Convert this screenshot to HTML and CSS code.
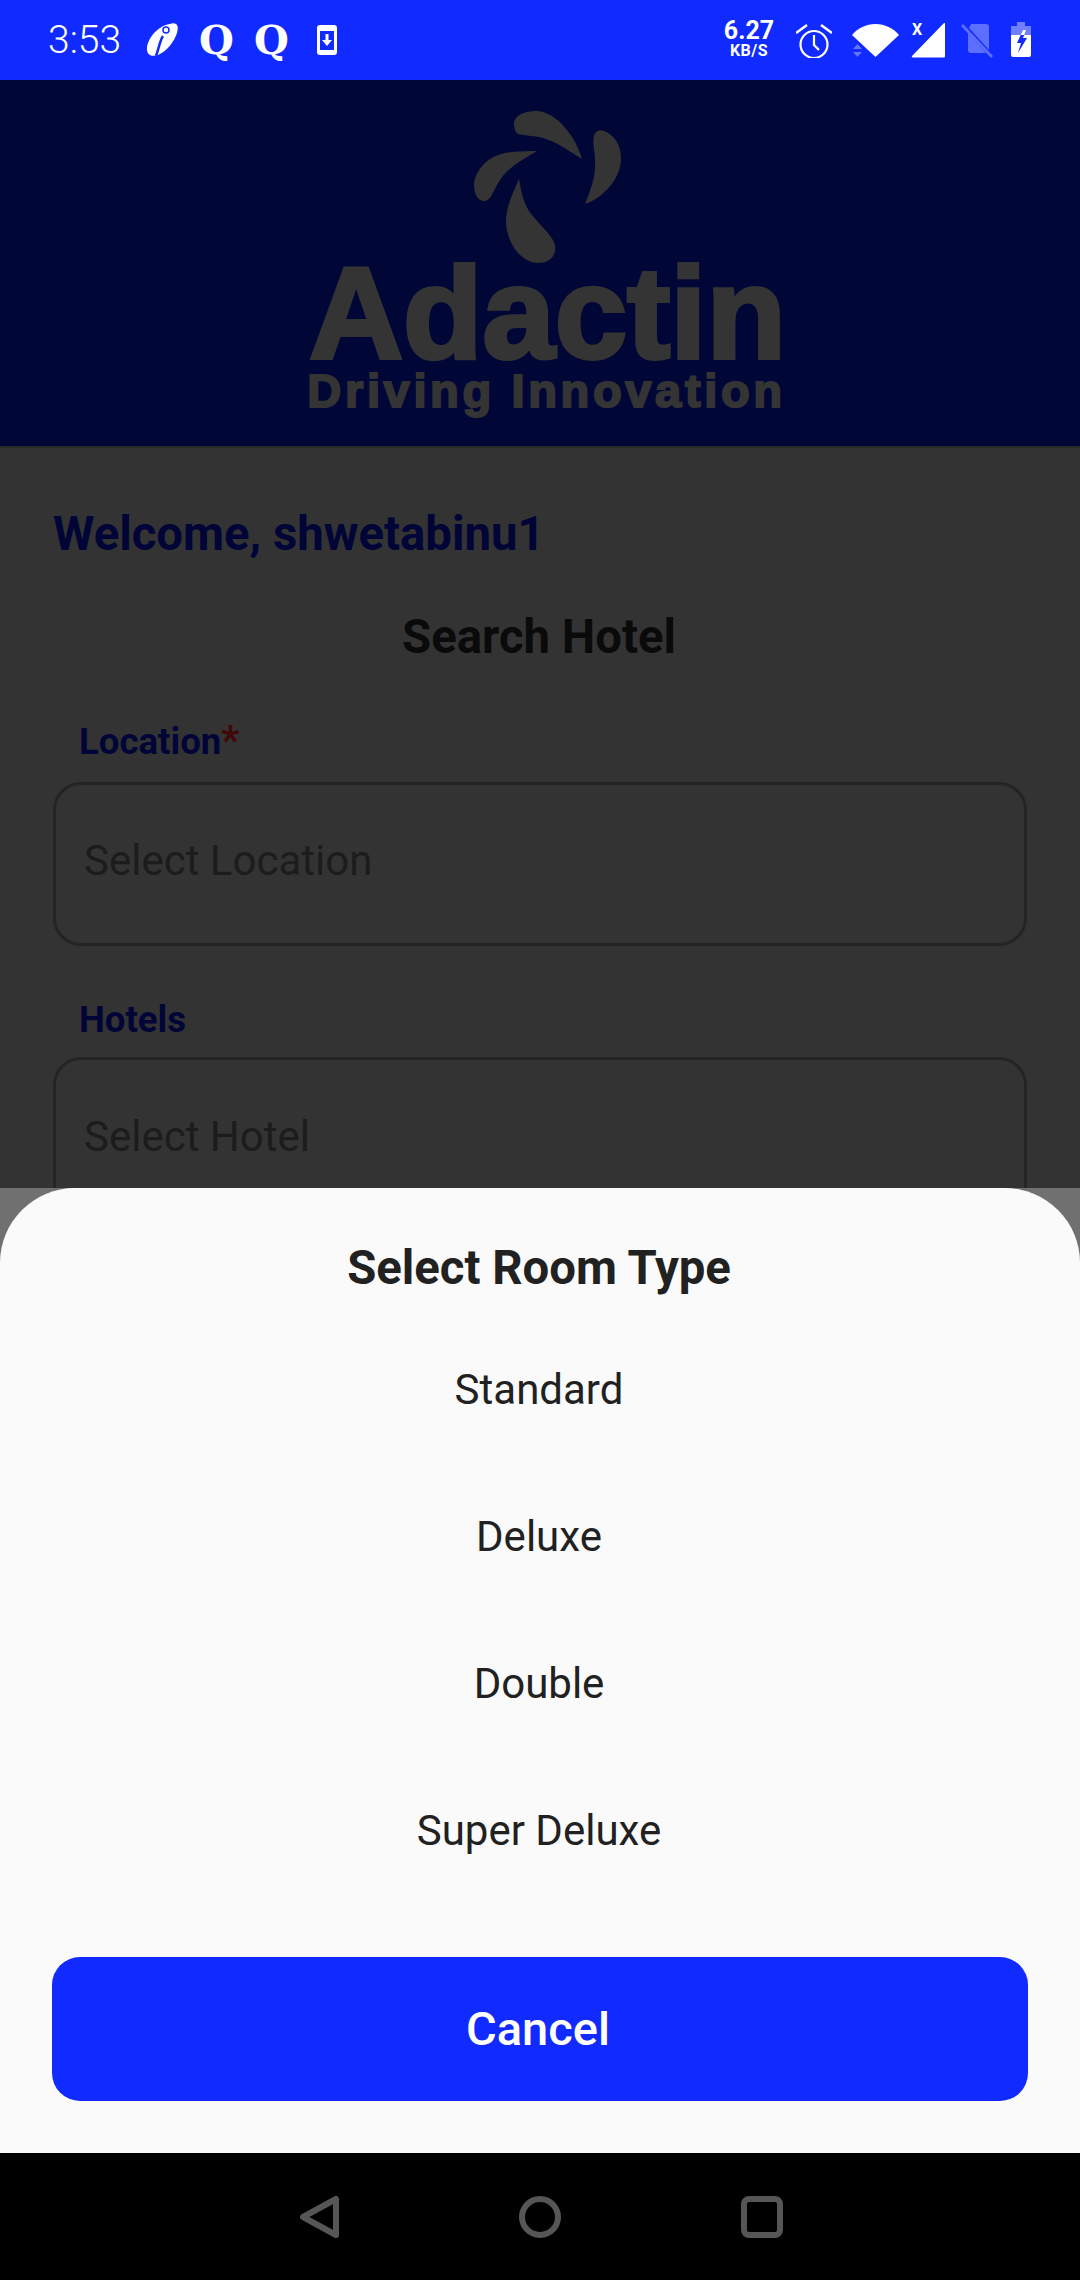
FILE: index.html
```html
<!DOCTYPE html>
<html lang="en">
<head>
    <meta charset="UTF-8">
    <meta name="viewport" content="width=device-width, initial-scale=1.0">
    <title>Search Hotel</title>
    <link rel="stylesheet" href="styles.css">
</head>
<body>
    <div class="status-bar">
        <span class="clock">3:53</span>
        <svg class="notif" width="34" height="36" viewBox="0 0 34 36"><path fill="#fff" d="M27 1.500c5-1 7 2.500 5 9.500-3 9-10 18-19 22-5 2-12 1-11-8C4 14 14 3 27 1.500z"/><path fill="none" stroke="#102aff" stroke-width="2.500" d="M18 14c-3 4-4 12-7 20"/><circle cx="21" cy="8" r="3" fill="#fff" stroke="#102aff" stroke-width="1.500"/></svg>
        <span class="q-mark first">Q</span>
        <span class="q-mark">Q</span>
        <svg class="notif phone" width="20" height="30" viewBox="0 0 20 30"><path fill="#fff" fill-rule="evenodd" d="M3 0h14a3 3 0 0 1 3 3v24a3 3 0 0 1-3 3H3a3 3 0 0 1-3-3V3a3 3 0 0 1 3-3zM3 6v19h14V6z"/><path fill="#fff" d="M8.500 9h3v6h3.500L10 21l-5-6h3.500z"/></svg>
        <div class="status-right">
            <div class="speed"><span class="speed-num">6.27</span><span class="speed-unit">KB/S</span></div>
            <svg class="alarm" width="36" height="36" viewBox="0 0 36 36"><g fill="none" stroke="#fff" stroke-width="2.200"><circle cx="18" cy="22.500" r="13.500"/><path d="M18 13v10l5 5"/><path d="M0 11l11-8M36 11L25 3" stroke-width="2.600"/></g></svg>
            <svg class="wifi" width="48" height="36" viewBox="0 0 48 36"><path fill="#fff" d="M0 13C6 6 14 2 23.500 2S41 6 47 13L23.500 35z"/><path fill="#fff" opacity=".35" d="M1 27l4.500-5 4.500 5zM1 30h9l-4.500 5z"/></svg>
            <div class="signal">
                <span class="signal-x">X</span>
                <svg width="36" height="36" viewBox="0 0 36 36"><path fill="#fff" d="M34 1c1 0 1 .500 1 1v32c0 1-.500 1.500-1.500 1.500H3c-1 0-1.500-1-1-1.500z"/></svg>
            </div>
            <svg class="sim" width="32" height="36" viewBox="0 0 32 36"><g fill="#fff" opacity=".32"><path d="M10 2h15a3 3 0 0 1 3 3v23L8 6z"/><path d="M7 11l18 20H10a3 3 0 0 1-3-3z"/><path d="M0 4l2-2 30 32-2 2z"/></g></svg>
            <svg class="battery" width="20" height="36" viewBox="0 0 20 36"><path fill="#fff" opacity=".4" d="M6 0h8v4h6v9H0V4h6z"/><path fill="#fff" fill-rule="evenodd" d="M0 13h20v20a2 2 0 0 1-2 2H2a2 2 0 0 1-2-2zM12 8L6 21h4l-3 10 9-15h-4l3-8z"/></svg>
        </div>
    </div>

    <header class="brand">
        <svg class="brand-mark" width="172" height="154" viewBox="0 0 172 154">
            <path d="M41 15C41 6 52 2 64 2c20 1 39 26 45 48-13-8-25-17-39-21-10-3-20-2-25-4-3-2-4-6-4-10z"/>
            <path d="M121 27c1-5 6-7 10-5 11 4 17 15 17 27 0 21-18 40-36 46 7-17 11-30 10-43 0-10-3-18-1-25z"/>
            <path d="M64 42C40 56 32 62 24 76c-5 9-7 17-14 16-6-1-9-8-9-16 1-16 16-32 38-33 9-1 17-1 25-1z"/>
            <path d="M46 70c2 12 4 22 10 32 8 12 23 23 26 34 2 11-6 18-17 18-17 0-32-21-32-42 0-14 7-28 13-42z"/>
        </svg>
        <div class="brand-name">Adactin</div>
        <div class="brand-tag">Driving Innovation</div>
    </header>

    <main class="search">
        <h2 class="welcome">Welcome, shwetabinu1</h2>
        <h2 class="search-title">Search Hotel</h2>
        <label class="field-label">Location<span class="req">*</span></label>
        <div class="field">Select Location</div>
        <label class="field-label hotels">Hotels</label>
        <div class="field hotel">Select Hotel</div>
    </main>

    <div class="sheet-wrap">
        <section class="sheet">
            <h3 class="sheet-title">Select Room Type</h3>
            <div class="options">
                <div class="option">Standard</div>
                <div class="option">Deluxe</div>
                <div class="option">Double</div>
                <div class="option">Super Deluxe</div>
            </div>
            <button type="button" class="cancel">Cancel</button>
        </section>
    </div>

    <nav class="nav-bar">
        <svg width="44" height="44" viewBox="0 0 44 44"><path fill="none" stroke="#565656" stroke-width="6" stroke-linejoin="round" d="M3 22L36 4v36z"/></svg>
        <svg width="44" height="44" viewBox="0 0 44 44"><circle cx="22" cy="22" r="18" fill="none" stroke="#565656" stroke-width="6"/></svg>
        <svg class="nav-square" width="44" height="44" viewBox="0 0 44 44"><rect x="4" y="4" width="36" height="36" rx="5" fill="none" stroke="#565656" stroke-width="6"/></svg>
    </nav>
</body>
</html>
```

FILE: styles.css
```css
html, body {margin: 0; padding: 0}
body {width: 1080px; height: 2280px; display: flex; flex-direction: column; overflow: hidden; font-family: Roboto, sans-serif; background: #333}

.status-bar {height: 80px; flex: none; display: flex; align-items: center; background: #102aff; color: #fff; padding: 0 49px 0 48px; box-sizing: border-box}
.clock {font-size: 39px; font-weight: 300; width: 97px}
.notif {flex: none}
.q-mark {font-family: "DejaVu Serif", serif; font-weight: bold; font-size: 40px; line-height: 40px; width: 55px; text-align: center}
.q-mark.first {margin-left: 10px}
.phone {margin-left: 18px}
.status-right {margin-left: auto; display: flex; align-items: center}
.speed {display: flex; flex-direction: column; align-items: center; width: 50px; margin-right: 22px; margin-bottom: 2px}
.speed-num {font-size: 25px; font-weight: 700; line-height: 24px}
.speed-unit {font-size: 16px; font-weight: 700; line-height: 16px; letter-spacing: .5px}
.alarm {margin-right: 20px}
.signal {position: relative; margin-left: 10px; margin-right: 15px; display: flex}
.signal-x {position: absolute; left: 2px; top: -1px; font-size: 16px; font-weight: 700; line-height: 18px}
.sim {margin-right: 18px}

.brand {height: 368px; flex: none; box-sizing: border-box; background: #000736; border-bottom: 2px solid #2a2a2a; display: flex; flex-direction: column; align-items: center; padding-top: 29px; color: #343434}
.brand-mark {flex: none; fill: #343434; margin-left: 38px}
.brand-name {font-family: "Liberation Sans", sans-serif; font-weight: bold; font-size: 130px; line-height: 96px; letter-spacing: 0; -webkit-text-stroke: 4px #343434; margin-top: 2px; margin-left: 15px; white-space: nowrap}
.brand-tag {font-family: "Liberation Sans", sans-serif; font-weight: bold; font-size: 47px; line-height: 40px; letter-spacing: 3.650px; -webkit-text-stroke: 2px #343434; margin-top: 10px; margin-left: 13px; white-space: nowrap}

.search {flex: 1; min-height: 0; overflow: hidden; padding: 0 53px}
.welcome {margin: 59px 0 0; font-size: 47.300px; line-height: 54px; font-weight: 700; color: #000436}
.search-title {margin: 49px 2px 0 0; font-size: 47.300px; line-height: 54px; font-weight: 700; color: #0a0a0a; text-align: center}
.field-label {display: block; margin: 58px 0 0 26px; font-size: 36.600px; line-height: 40px; font-weight: 700; color: #000436}
.field-label.hotels {margin-top: 54px; margin-bottom: -3px}
.req {color: #420808; font-size: 40px; line-height: 30px}
.field {margin-top: 20px; height: 164px; box-sizing: border-box; border: 3px solid #242424; border-radius: 28px; padding: 51px 28px 0; font-size: 42px; line-height: 50px; color: #1c1c1c}
.field.hotel {padding-top: 52px}

.sheet-wrap {flex: none; height: 965px; background: #707070}
.sheet {height: 965px; box-sizing: border-box; background: #fafafa; border-radius: 75px 75px 0 0; padding: 53px 53px 0; display: flex; flex-direction: column; color: #212121}
.sheet-title {margin: 0 2px 0 0; font-size: 47.300px; line-height: 54px; font-weight: 700; text-align: center}
.options {margin: 24px 2px 0 0}
.option {height: 147px; font-size: 42px; line-height: 50px; text-align: center; padding-top: 46px; box-sizing: border-box}
.cancel {margin: 50px -1px 0; height: 144px; flex: none; border: none; border-radius: 28px; background: #102aff; color: #fff; padding: 0 4px 2px 0; font-family: Roboto, sans-serif; font-size: 47px; font-weight: 500}

.nav-bar {height: 127px; flex: none; background: #000; display: flex; justify-content: flex-start; align-items: center; gap: 174px; padding-left: 300px; box-sizing: border-box}
.nav-square {margin-left: 4px}
```
